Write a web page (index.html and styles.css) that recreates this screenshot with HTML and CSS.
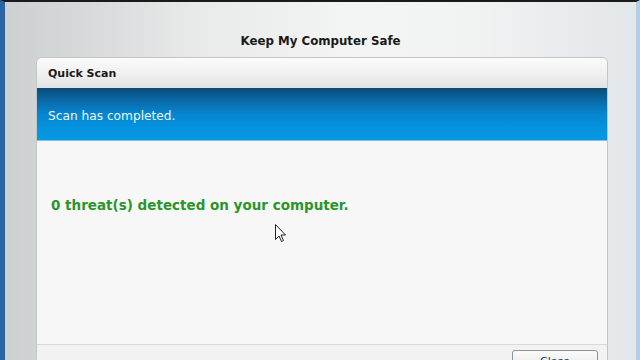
FILE: index.html
```html
<!DOCTYPE html>
<html>
<head>
<meta charset="utf-8">
<link rel="stylesheet" href="styles.css">
</head>
<body>
<div class="frame">
  <div class="title">Keep My Computer Safe</div>
  <div class="panel">
    <div class="panel-head">Quick Scan</div>
    <div class="band">Scan has completed.</div>
    <div class="content">
      <div class="message">0 threat(s) detected on your computer.</div>
    </div>
    <div class="footer">
      <button class="btn">Close</button>
    </div>
  </div>
  <svg class="cursor" width="12" height="19" viewBox="0 0 12 19">
    <path d="M0.5 0.5 L0.5 15.5 L4 12 L6.5 17.5 L8.5 16.5 L6 11 L10.5 11 Z" fill="#fff" stroke="#222" stroke-width="1"/>
  </svg>
</div>
</body>
</html>
```
FILE: styles.css
```css
html, body {
  margin: 0;
  padding: 0;
}
body {
  width: 640px;
  height: 360px;
  overflow: hidden;
  font-family: "DejaVu Sans", Verdana, sans-serif;
}
.frame {
  position: relative;
  box-sizing: border-box;
  width: 640px;
  height: 360px;
  display: flex;
  flex-direction: column;
  border-top: 2px solid #1a1a1a;
  border-left: 5px solid #2b64a0;
  border-right: 4px solid #b4cde6;
  background: linear-gradient(90deg, #cdd0d0 0%, #d6d9d9 12%, #e8eaea 30%, #f3f4f4 55%, #f1f2f2 75%, #e6eaec 92%, #e2e7ea 100%);
}
.title {
  height: 55px;
  box-sizing: border-box;
  padding-top: 31px;
  text-align: center;
  font-size: 11.8px;
  font-weight: bold;
  color: #1a1a1a;
  line-height: 16px;
}
.panel {
  flex: 1;
  margin: 0 28px 0 31px;
  display: flex;
  flex-direction: column;
  border: 1px solid #c4c6c6;
  border-bottom: none;
  border-radius: 6px 6px 0 0;
  background: #f7f7f7;
  overflow: hidden;
}
.panel-head {
  height: 30px;
  box-sizing: border-box;
  padding: 8px 0 0 11px;
  font-size: 11px;
  font-weight: bold;
  line-height: 16px;
  color: #1a1a1a;
  background: linear-gradient(180deg, #fbfbfb 0%, #f1f1f1 50%, #e2e2e2 100%);
}
.band {
  height: 53px;
  box-sizing: border-box;
  padding: 20px 0 0 11px;
  font-size: 12.2px;
  line-height: 16px;
  color: #eef6fc;
  background: linear-gradient(180deg, #0b4a78 0%, #0a6aa8 25%, #0586d0 50%, #0594e0 80%, #0798e2 100%);
  border-bottom: 1px solid #7fc0ea;
}
.content {
  flex: 1;
  padding: 56px 0 0 14px;
  background: #f7f7f7;
}
.message {
  font-size: 13.5px;
  font-weight: bold;
  line-height: 16px;
  color: #2a962a;
}
.footer {
  height: 15px;
  border-top: 1px solid #d8d8d8;
  background: #f2f2f2;
  display: flex;
  justify-content: flex-end;
  padding-right: 9px;
}
.btn {
  margin-top: 5px;
  width: 86px;
  height: 22px;
  box-sizing: border-box;
  border: 1px solid #8a939c;
  border-radius: 3px;
  background: linear-gradient(180deg, #fbfbfb, #e4e4e4);
  font-family: "DejaVu Sans", Verdana, sans-serif;
  font-size: 11px;
  color: #1a3a5a;
  padding: 2px 0 0;
  line-height: 14px;
}
.cursor {
  position: absolute;
  left: 270px;
  top: 222px;
}
```
